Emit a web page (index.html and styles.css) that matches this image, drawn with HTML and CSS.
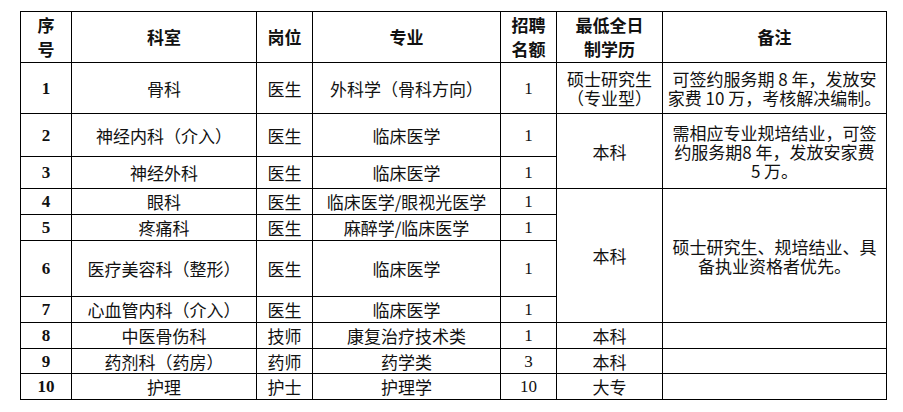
FILE: index.html
```html
<!DOCTYPE html>
<html lang="zh-CN">
<head>
<meta charset="utf-8">
<title>招聘岗位</title>
<link rel="stylesheet" href="styles.css">
</head>
<body>
<table class="jobs">
  <colgroup>
    <col class="c-no"><col class="c-dept"><col class="c-post"><col class="c-major"><col class="c-count"><col class="c-edu"><col class="c-note">
  </colgroup>
  <thead>
    <tr class="r-head">
      <th class="two">序<br>号</th>
      <th>科室</th>
      <th>岗位</th>
      <th>专业</th>
      <th class="two">招聘<br>名额</th>
      <th class="two">最低全日<br>制学历</th>
      <th>备注</th>
    </tr>
  </thead>
  <tbody>
    <tr class="r51">
      <td class="no">1</td><td>骨科</td><td>医生</td><td>外科学（骨科方向）</td><td class="num">1</td>
      <td>硕士研究生<br>（专业型）</td>
      <td>可签约服务期 8 年，发放安<br>家费 10 万，考核解决编制。</td>
    </tr>
    <tr class="r43">
      <td class="no">2</td><td>神经内科（介入）</td><td>医生</td><td>临床医学</td><td class="num">1</td>
      <td rowspan="2">本科</td>
      <td rowspan="2">需相应专业规培结业，可签<br>约服务期8 年，发放安家费<br>5 万。</td>
    </tr>
    <tr class="r32">
      <td class="no">3</td><td>神经外科</td><td>医生</td><td>临床医学</td><td class="num">1</td>
    </tr>
    <tr class="r26">
      <td class="no">4</td><td>眼科</td><td>医生</td><td>临床医学/眼视光医学</td><td class="num">1</td>
      <td rowspan="4">本科</td>
      <td rowspan="4">硕士研究生、规培结业、具<br>备执业资格者优先。</td>
    </tr>
    <tr class="r26">
      <td class="no">5</td><td>疼痛科</td><td>医生</td><td>麻醉学/临床医学</td><td class="num">1</td>
    </tr>
    <tr class="r56">
      <td class="no">6</td><td>医疗美容科（整形）</td><td>医生</td><td>临床医学</td><td class="num">1</td>
    </tr>
    <tr class="r26">
      <td class="no">7</td><td>心血管内科（介入）</td><td>医生</td><td>临床医学</td><td class="num">1</td>
    </tr>
    <tr class="r26">
      <td class="no">8</td><td>中医骨伤科</td><td>技师</td><td>康复治疗技术类</td><td class="num">1</td><td>本科</td><td></td>
    </tr>
    <tr class="r25">
      <td class="no">9</td><td>药剂科（药房）</td><td>药师</td><td>药学类</td><td class="num">3</td><td>本科</td><td></td>
    </tr>
    <tr class="r26">
      <td class="no">10</td><td>护理</td><td>护士</td><td>护理学</td><td class="num">10</td><td>大专</td><td></td>
    </tr>
  </tbody>
</table>
</body>
</html>
```
FILE: styles.css
```css
html, body {
  margin: 0;
  padding: 0;
  background: #fff;
}

body {
  padding: 11px 0 0 20px;
  font-family: "Noto Sans CJK SC", "Noto Sans", sans-serif;
  color: #111;
}

.jobs {
  border-collapse: collapse;
  table-layout: fixed;
  width: 866px;
  font-size: 17px;
  line-height: 19px;
}

.c-no { width: 51px; }
.c-dept { width: 185px; }
.c-post { width: 56px; }
.c-major { width: 188px; }
.c-count { width: 56px; }
.c-edu { width: 106px; }
.c-note { width: 224px; }

.jobs th,
.jobs td {
  border: 1px solid #000;
  padding: 0 1px;
  text-align: center;
  vertical-align: middle;
  white-space: nowrap;
  font-weight: 400;
}

.jobs th {
  font-weight: 700;
  line-height: 24px;
}

.r-head { height: 51px; }
.r51 { height: 51px; }
.r43 { height: 43px; }
.r32 { height: 32px; }
.r26 { height: 26px; }
.r25 { height: 25px; }
.r56 { height: 56px; }

.jobs td.no {
  font-family: "Liberation Serif", serif;
  font-weight: 700;
  font-size: 17px;
}

.jobs td.num {
  font-family: "Liberation Serif", serif;
  font-size: 17px;
}
```
